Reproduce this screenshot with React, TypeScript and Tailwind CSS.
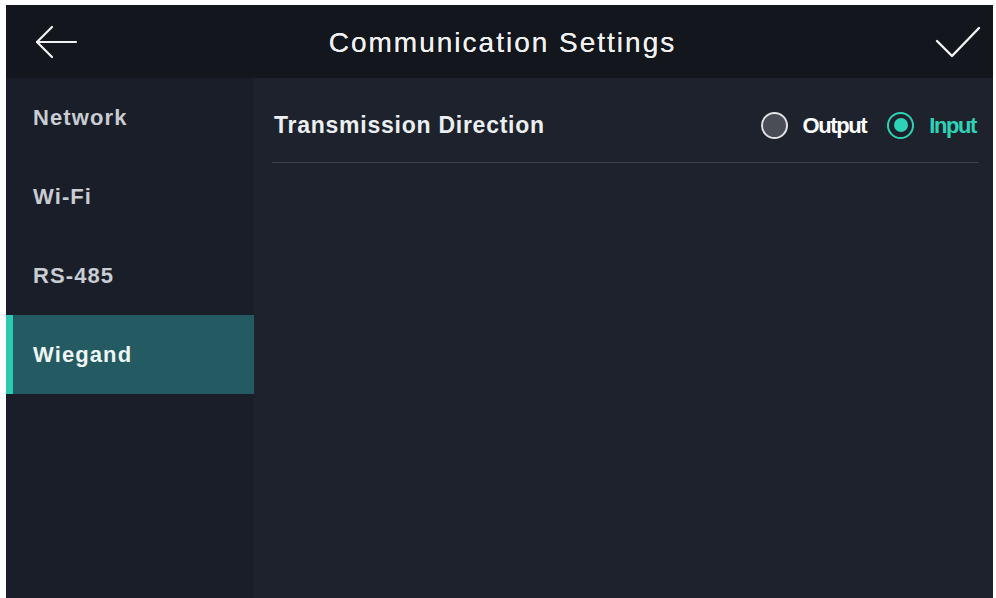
import { useState } from "react"

const menu = ["Network", "Wi-Fi", "RS-485", "Wiegand"]

export default function App() {
    const [active, setActive] = useState("Wiegand")
    const [direction, setDirection] = useState<"Output" | "Input">("Input")

    return (
        <div className="w-[996px] h-[598px] bg-white pt-[5px] pl-[6px] pr-[3px] font-['Liberation_Sans',Arial,sans-serif]">
            <div className="flex flex-col h-full bg-[#1d222c]">
                {/* header */}
                <header className="h-[73px] flex items-center justify-between bg-[#13161c] pl-[28px] pr-[12px]">
                    <button className="w-[50px] h-[40px] flex items-center">
                        <svg width="44" height="36" viewBox="0 0 44 36" fill="none" stroke="#f2f2f2" strokeWidth="2.2" strokeLinecap="round" strokeLinejoin="round">
                            <path d="M42 18H3" />
                            <path d="M18 3L3 18l15 15" />
                        </svg>
                    </button>
                    <h1 className="text-[28px] text-[#f0f0f0] tracking-[2px] pt-[2px] [text-shadow:0_0_0.6px_#f0f0f0]">Communication Settings</h1>
                    <button className="w-[60px] h-[40px] flex items-center justify-end">
                        <svg width="46" height="34" viewBox="0 0 46 34" fill="none" stroke="#f2f2f2" strokeWidth="2.4" strokeLinecap="round" strokeLinejoin="round">
                            <path d="M2 16l15 15L44 3" />
                        </svg>
                    </button>
                </header>

                <div className="flex flex-1">
                    {/* sidebar */}
                    <nav className="w-[248px] bg-[#1a1e28] flex flex-col">
                        {menu.map((item) => (
                            <button
                                key={item}
                                onClick={() => setActive(item)}
                                className={`h-[79px] flex items-center text-left text-[22px] font-bold tracking-[1.1px] pl-[20px] border-l-[7px] ${
                                    active === item
                                        ? "bg-[#245a62] border-[#2ccab4] text-[#eef5f4]"
                                        : "border-transparent text-[#c9ccd3]"
                                }`}
                            >
                                {item}
                            </button>
                        ))}
                    </nav>

                    {/* content */}
                    <section className="flex-1 pl-[18px] pr-[14px]">
                        <div className="h-[85px] flex items-center justify-between border-b border-[#3a3f4a]">
                            <span className="text-[23px] font-bold text-[#eceff2] tracking-[0.75px] pl-[2px] pt-[10px]">Transmission Direction</span>
                            <div className="flex items-center pt-[10px] pr-[3px]">
                                <button onClick={() => setDirection("Output")} className="flex items-center gap-[15px]">
                                    <span className={`w-[27px] h-[27px] rounded-full border-[2.5px] flex items-center justify-center ${direction === "Output" ? "border-[#2ed3b7]" : "border-[#e2e2e2] bg-[#4a4d55]"}`}>
                                        {direction === "Output" && <span className="w-[14px] h-[14px] rounded-full bg-[#2ed3b7]" />}
                                    </span>
                                    <span className={`text-[22px] font-bold tracking-[-1.4px] ${direction === "Output" ? "text-[#2ed3b7]" : "text-white"}`}>Output</span>
                                </button>
                                <button onClick={() => setDirection("Input")} className="flex items-center gap-[15px] ml-[21px]">
                                    <span className={`w-[27px] h-[27px] rounded-full border-[2.5px] flex items-center justify-center ${direction === "Input" ? "border-[#2ed3b7]" : "border-[#e2e2e2] bg-[#4a4d55]"}`}>
                                        {direction === "Input" && <span className="w-[14px] h-[14px] rounded-full bg-[#2ed3b7]" />}
                                    </span>
                                    <span className={`text-[22px] font-bold tracking-[-1.4px] ${direction === "Input" ? "text-[#2ed3b7]" : "text-white"}`}>Input</span>
                                </button>
                            </div>
                        </div>
                    </section>
                </div>
            </div>
        </div>
    )
}
